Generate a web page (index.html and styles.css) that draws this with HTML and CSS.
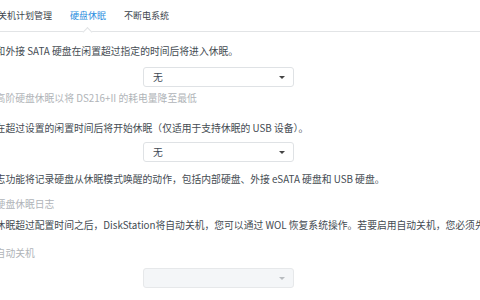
FILE: index.html
```html
<!DOCTYPE html>
<html lang="zh-CN">
<head>
    <meta charset="UTF-8">
    <title>硬盘休眠</title>
    <link rel="stylesheet" href="styles.css">
</head>
<body>
    <div class="tabs">
        <div class="tab">开关机计划管理</div>
        <div class="tab active">硬盘休眠</div>
        <div class="tab">不断电系统</div>
    </div>
    <div class="panel">
        <div class="row text t1">内部和外接 SATA 硬盘在闲置超过指定的时间后将进入休眠。</div>
        <div class="row field f1"><div class="select"><span>无</span><i class="caret"></i></div></div>
        <div class="row text muted m1">启用高阶硬盘休眠以将 DS216+II 的耗电量降至最低</div>
        <div class="row text t2">硬盘在超过设置的闲置时间后将开始休眠（仅适用于支持休眠的 USB 设备）。</div>
        <div class="row field f2"><div class="select"><span>无</span><i class="caret"></i></div></div>
        <div class="row text t3">此日志功能将记录硬盘从休眠模式唤醒的动作，包括内部硬盘、外接 eSATA 硬盘和 USB 硬盘。</div>
        <div class="row text muted m2">启用硬盘休眠日志</div>
        <div class="row text t4">硬盘休眠超过配置时间之后，DiskStation将自动关机，您可以通过 WOL 恢复系统操作。若要启用自动关机，您必须先启用</div>
        <div class="row text muted m3">启用自动关机</div>
        <div class="row field f3"><div class="select disabled"><span></span><i class="caret"></i></div></div>
    </div>
</body>
</html>
```

FILE: styles.css
```css
body {
    margin: 0;
    background: #fff;
    font-family: "Noto Sans CJK SC", "Noto Sans", sans-serif;
    font-size: 9.8px;
    color: #444b52;
    overflow: hidden;
}
.tabs {
    display: flex;
    height: 31px;
    align-items: center;
    border-bottom: 1px solid #e2e4e6;
    margin-left: -20px;
    font-size: 9px;
}
.tab {
    padding: 0 9px;
    color: #3c444c;
}
.tab.active {
    color: #2d8ee0;
    position: relative;
    align-self: stretch;
    display: flex;
    align-items: center;
}
.tab.active::after {
    content: "";
    position: absolute;
    left: 50%;
    bottom: -1px;
    width: 6px;
    height: 6px;
    margin-left: -4px;
    background: #fff;
    border-left: 1px solid #e2e4e6;
    border-top: 1px solid #e2e4e6;
    transform: translateY(50%) rotate(45deg);
}
.panel {
    margin-left: -24px;
    white-space: nowrap;
}
.row {
    line-height: 14px;
}
.muted {
    color: #b0b4b8;
}
.t1 { margin-top: 12px; }
.f1 { margin-top: 9px; }
.m1 { margin-top: 4px; }
.t2 { margin-top: 16px; }
.f2 { margin-top: 7px; }
.t3 { margin-top: 10px; }
.m2 { margin-top: 11px; }
.t4 { margin-top: 7px; }
.m3 { margin-top: 14px; }
.f3 { margin-top: 8px; }
.field {
    padding-left: 167px;
}
.select {
    width: 132px;
    height: 18px;
    border: 1px solid #dfe2e5;
    border-radius: 3px;
    display: flex;
    align-items: center;
    justify-content: space-between;
    padding: 0 8px 0 9px;
    color: #404a54;
}
.caret {
    width: 0;
    height: 0;
    border-left: 3px solid transparent;
    border-right: 3px solid transparent;
    border-top: 3px solid #444;
}
.select.disabled {
    background: #f4f6f8;
    border-color: #e6e8ea;
}
.select.disabled .caret {
    border-top-color: #b8bcc0;
}
```
